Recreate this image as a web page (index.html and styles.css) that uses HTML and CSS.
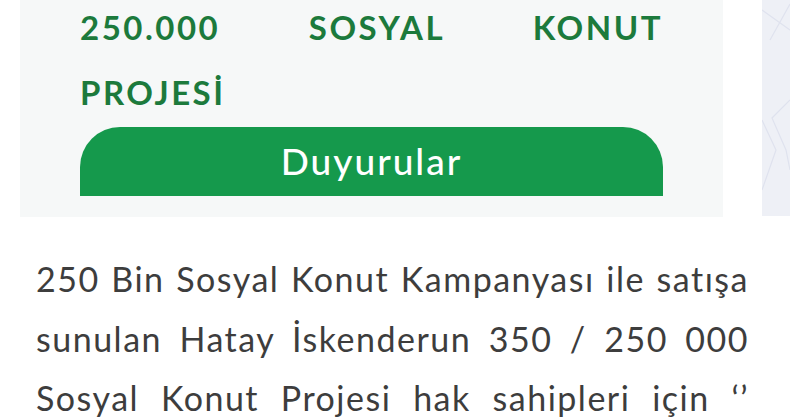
FILE: index.html
```html
<!DOCTYPE html>
<html lang="tr">
<head>
<meta charset="utf-8">
<title>250.000 Sosyal Konut Projesi</title>
<link rel="stylesheet" href="styles.css">
</head>
<body>
  <div class="top">
    <section class="card">
      <h1 class="title">
        <span class="line">250.000 SOSYAL KONUT</span>
        <span class="last">PROJESİ</span>
      </h1>
      <div class="tab">Duyurular</div>
    </section>
    <aside class="side">
      <svg width="28" height="216" viewBox="0 0 28 216" aria-hidden="true">
        <path d="M0 10 L28 30 M28 4 L8 40 M28 100 L10 118 L24 150 L28 170 M0 120 L14 150 L0 190" fill="none" stroke="#dfe2ee" stroke-width="1.2"/>
      </svg>
    </aside>
  </div>
  <p class="text">
    <span class="line">250 Bin Sosyal Konut Kampanyası ile satışa</span>
    <span class="line">sunulan Hatay İskenderun 350 / 250 000</span>
    <span class="line">Sosyal Konut Projesi hak sahipleri için ‘’</span>
  </p>
</body>
</html>
```
FILE: styles.css
```css
html, body {
  margin: 0;
  padding: 0;
  background: #ffffff;
}

body {
  width: 790px;
  height: 420px;
  overflow: hidden;
  font-family: Lato, "Open Sans", sans-serif;
}

.top {
  display: flex;
  height: 217px;
}

.card {
  margin-left: 20px;
  width: 703px;
  background: #f6f8f8;
  padding: 0 60px 0 60px;
  box-sizing: border-box;
  display: flex;
  flex-direction: column;
}

.title {
  margin: -5px 0 0;
  color: #1c7a3c;
  font-size: 33px;
  font-weight: 700;
  line-height: 65px;
  letter-spacing: 2.5px;
}

.line {
  display: block;
  text-align: justify;
  text-align-last: justify;
}

.last {
  display: block;
}

.tab {
  margin-top: 2px;
  height: 69px;
  background: #15994c;
  border-radius: 40px 40px 0 0;
  color: #ffffff;
  font-size: 37px;
  font-weight: 500;
  letter-spacing: 2px;
  text-align: center;
  line-height: 67px;
}

.side {
  margin-left: 39px;
  width: 28px;
  height: 216px;
  background: #eef0f6;
}

.side svg {
  display: block;
}

.text {
  margin: 32px 41px 0 36px;
  color: #3d3d3d;
  font-size: 34px;
  line-height: 59.5px;
  letter-spacing: 1.5px;
}
```
